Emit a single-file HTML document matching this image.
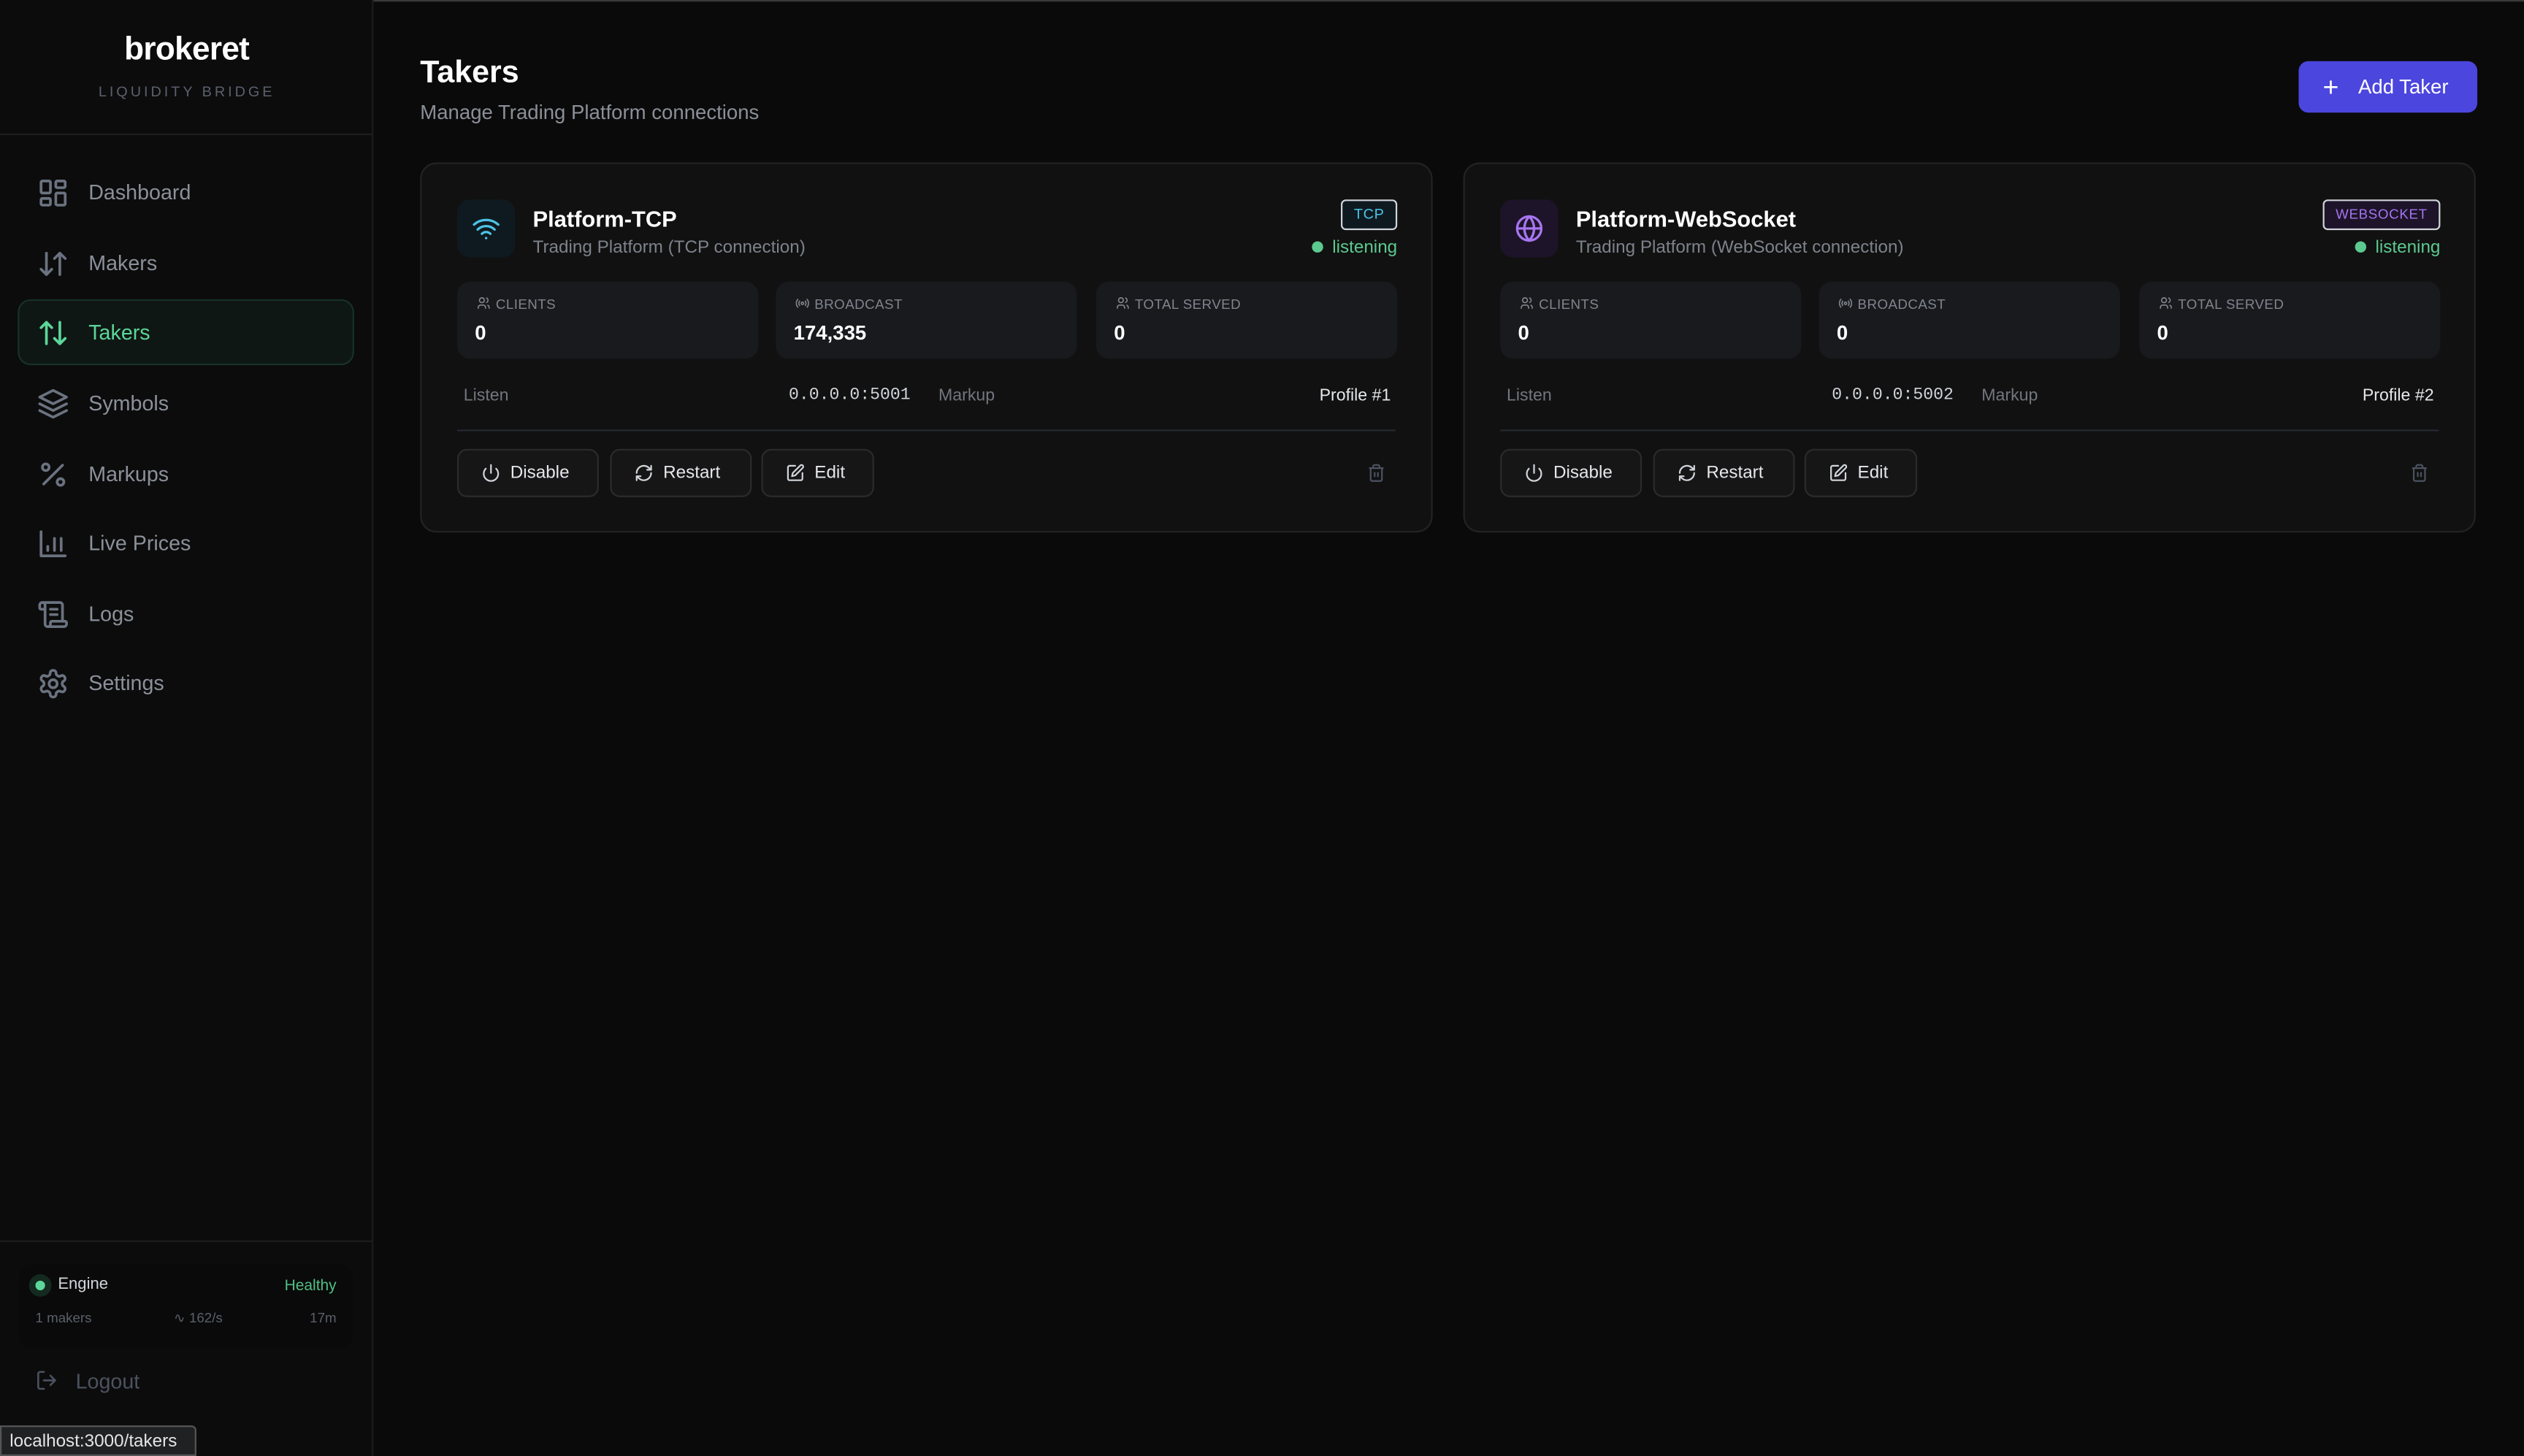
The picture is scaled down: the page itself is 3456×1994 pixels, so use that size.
<!DOCTYPE html>
<html><head><meta charset="utf-8">
<style>
html,body{margin:0;padding:0;background:#0a0a0a;width:3456px;height:1994px;overflow:hidden}
#w{position:absolute;left:0;top:0;width:1568px;height:905px;transform:scale(2.2041,2.2033);transform-origin:0 0;font-family:"Liberation Sans",sans-serif;color:#e5e7eb;background:#0a0a0a}
.a{position:absolute}
.sb{left:0;top:0;width:232px;height:905px;background:#0c0c0c;border-right:1px solid #1c1c1c;box-sizing:border-box}
.nav{position:absolute;left:11px;width:209px;height:41px;box-sizing:border-box;border-radius:8px}
.nav svg{position:absolute;left:12px;top:11px;width:20px;height:20px;fill:none;stroke:#6b7280;stroke-width:2;stroke-linecap:round;stroke-linejoin:round}
.nav span{position:absolute;left:44px;top:13px;font-size:13px;color:#8b909a}
.card{top:101px;width:629px;height:230px;background:#111;border:1px solid #232323;border-radius:10px;box-sizing:border-box}
.ib{left:22px;top:22px;width:36px;height:36px;border-radius:8px}
.nm{left:69px;top:26px;font-size:14px;font-weight:bold;color:#fff}
.sub{left:69px;top:46px;font-size:11px;color:#7d828b}
.badge{right:21px;top:22px;height:17px;padding:0 7px;border:1px solid #d0d4da;border-radius:3px;font-size:9px;line-height:17px;letter-spacing:.3px}
.lis{right:21px;top:46px;font-size:11px;color:#5cc98f}
.lis:before{content:"";display:inline-block;width:7px;height:7px;border-radius:50%;background:#5cc98f;margin-right:6px;vertical-align:0}
.st{top:73px;width:187px;height:48px;background:#181a1e;border-radius:8px}
.st .l{position:absolute;left:12px;top:9px;font-size:8.5px;color:#80858d;letter-spacing:.2px}
.st .l svg{width:9px;height:9px;vertical-align:-1px;margin-right:3px;fill:none;stroke:#80858d;stroke-width:2}
.st .v{position:absolute;left:11px;top:25px;font-size:12.5px;font-weight:bold;color:#fff}
.row{top:138px;font-size:10.5px;color:#72767e}
.mono{font-family:"Liberation Mono",monospace;color:#d1d5db;font-size:10.5px}
.hr{left:22px;right:22px;top:165px;height:1px;background:#252a32}
.btn{top:177px;height:30px;border:1px solid #2b2b2b;background:#161616;border-radius:6px;box-sizing:border-box;font-size:11px;color:#e5e7eb;line-height:29px}
.btn svg{position:absolute;left:14px;top:8px;width:12px;height:12px;fill:none;stroke:#d1d5db;stroke-width:2;stroke-linecap:round;stroke-linejoin:round}
.btn span{position:absolute;left:32px}
</style></head><body><div id="w">
<div class="a" style="left:0;top:0;width:1568px;height:1px;background:#3a3a3a"></div>
<div class="a sb">
 <div class="a" style="left:0;width:232px;top:20px;text-align:center;font-size:20px;font-weight:bold;color:#fff;letter-spacing:-.3px">brokeret</div>
 <div class="a" style="left:0;width:232px;top:52px;text-align:center;font-size:9px;color:#5a606e;letter-spacing:1.8px">LIQUIDITY BRIDGE</div>
 <div class="a" style="left:0;width:231px;top:83px;height:1px;background:#1e1e1e"></div>
 <div class="nav" style="top:99px"><svg viewBox="0 0 24 24"><rect x="3" y="3" width="7" height="9" rx="1"/><rect x="14" y="3" width="7" height="5" rx="1"/><rect x="14" y="12" width="7" height="9" rx="1"/><rect x="3" y="16" width="7" height="5" rx="1"/></svg><span>Dashboard</span></div>
 <div class="nav" style="top:143px"><svg viewBox="0 0 24 24"><path d="M3 16l4 4 4-4M7 20V4M21 8l-4-4-4 4M17 4v16"/></svg><span>Makers</span></div>
 <div class="nav" style="top:186px;background:#0f1714;border:1px solid #173226"><svg viewBox="0 0 24 24" style="stroke:#5cd69a;left:11px;top:10px"><path d="M3 8l4-4 4 4M7 4v16M21 16l-4 4-4-4M17 20V4"/></svg><span style="color:#5cd69a;left:43px;top:12px">Takers</span></div>
 <div class="nav" style="top:230px"><svg viewBox="0 0 24 24"><path d="M12 2l10 5-10 5L2 7z"/><path d="M2 12l10 5 10-5M2 17l10 5 10-5"/></svg><span>Symbols</span></div>
 <div class="nav" style="top:274px"><svg viewBox="0 0 24 24"><path d="M19 5L5 19"/><circle cx="6.5" cy="6.5" r="2.5"/><circle cx="17.5" cy="17.5" r="2.5"/></svg><span>Markups</span></div>
 <div class="nav" style="top:317px"><svg viewBox="0 0 24 24"><path d="M3 3v18h18M8 17v-3M13 17V8M18 17v-9"/></svg><span>Live Prices</span></div>
 <div class="nav" style="top:361px"><svg viewBox="0 0 24 24"><path d="M15 12h-5M15 8h-5M19 17V5a2 2 0 0 0-2-2H4M8 21h12a2 2 0 0 0 2-2v-1a1 1 0 0 0-1-1H11a1 1 0 0 0-1 1v1a2 2 0 1 1-4 0V5a2 2 0 1 0-4 0v2a1 1 0 0 0 1 1h3"/></svg><span>Logs</span></div>
 <div class="nav" style="top:404px"><svg viewBox="0 0 24 24"><path d="M12.2 2h-.4a2 2 0 0 0-2 2v.2a2 2 0 0 1-1 1.7l-.4.3a2 2 0 0 1-2 0l-.2-.1a2 2 0 0 0-2.7.7l-.2.4a2 2 0 0 0 .7 2.7l.2.1a2 2 0 0 1 1 1.7v.5a2 2 0 0 1-1 1.7l-.2.1a2 2 0 0 0-.7 2.7l.2.4a2 2 0 0 0 2.7.7l.2-.1a2 2 0 0 1 2 0l.4.3a2 2 0 0 1 1 1.7v.2a2 2 0 0 0 2 2h.4a2 2 0 0 0 2-2v-.2a2 2 0 0 1 1-1.7l.4-.3a2 2 0 0 1 2 0l.2.1a2 2 0 0 0 2.7-.7l.2-.4a2 2 0 0 0-.7-2.7l-.2-.1a2 2 0 0 1-1-1.7v-.5a2 2 0 0 1 1-1.7l.2-.1a2 2 0 0 0 .7-2.7l-.2-.4a2 2 0 0 0-2.7-.7l-.2.1a2 2 0 0 1-2 0l-.4-.3a2 2 0 0 1-1-1.7V4a2 2 0 0 0-2-2z"/><circle cx="12" cy="12" r="3"/></svg><span>Settings</span></div>
 <div class="a" style="left:0;width:231px;top:771px;height:1px;background:#1e1e1e"></div>
 <div class="a" style="left:12px;top:786px;width:207px;height:52px;background:#0a0a0a;border-radius:8px">
  <div class="a" style="left:6px;top:6px;width:14px;height:14px;border-radius:50%;background:#14291f"></div>
  <div class="a" style="left:10px;top:10px;width:6px;height:6px;border-radius:50%;background:#5cd69a"></div>
  <div class="a" style="left:24px;top:7px;font-size:10px;color:#d1d5db">Engine</div>
  <div class="a" style="right:10px;top:8px;font-size:9.5px;color:#4fbf85">Healthy</div>
  <div class="a" style="left:10px;top:28px;font-size:8.5px;color:#5a606a">1 makers</div>
  <div class="a" style="left:96px;top:28px;font-size:8.5px;color:#5a606a">∿ 162/s</div>
  <div class="a" style="right:10px;top:28px;font-size:8.5px;color:#5a606a">17m</div>
 </div>
 <svg class="a" style="left:22px;top:851px;width:14px;height:14px;fill:none;stroke:#4b5260;stroke-width:2;stroke-linecap:round;stroke-linejoin:round" viewBox="0 0 24 24"><path d="M9 21H5a2 2 0 0 1-2-2V5a2 2 0 0 1 2-2h4M16 17l5-5-5-5M21 12H9"/></svg>
 <div class="a" style="left:47px;top:851px;font-size:13px;color:#4b5260">Logout</div>
</div>
<div class="a" style="left:0;top:886px;width:122px;height:19px;background:#1f2122;border:1px solid #555;border-radius:0 3px 0 0;box-sizing:border-box;font-size:11px;color:#e5e5e5;line-height:18px;padding-left:5px">localhost:3000/takers</div>

<div class="a" style="left:261px;top:34px;font-size:19.5px;font-weight:bold;color:#fff">Takers</div>
<div class="a" style="left:261px;top:63px;font-size:12.5px;color:#8b8f98">Manage Trading Platform connections</div>
<div class="a" style="left:1428px;top:38px;width:111px;height:32px;background:#4b46dd;border-radius:6px;font-size:12.5px;color:#fff;line-height:33px"><span style="position:absolute;left:15px;font-size:17px;top:0">+</span><span style="position:absolute;left:37px">Add Taker</span></div>

<!-- card 1 -->
<div class="a card" style="left:261px">
 <div class="a ib" style="background:#0f1a20"><svg style="position:absolute;left:9px;top:9px;width:18px;height:18px;fill:none;stroke:#4cc3e6;stroke-width:2;stroke-linecap:round" viewBox="0 0 24 24"><path d="M12 20h.01M2 8.8a15 15 0 0 1 20 0M5 12.9a10 10 0 0 1 14 0M8.5 16.4a5 5 0 0 1 7 0"/></svg></div>
 <div class="a nm">Platform-TCP</div>
 <div class="a sub">Trading Platform (TCP connection)</div>
 <div class="a badge" style="color:#4cc3e6;background:#0f1a20">TCP</div>
 <div class="a lis">listening</div>
 <div class="a st" style="left:22px"><div class="l"><svg viewBox="0 0 24 24"><circle cx="9" cy="7" r="4"/><path d="M3 21v-2a4 4 0 0 1 4-4h4a4 4 0 0 1 4 4v2M16 3.1a4 4 0 0 1 0 7.8M21 21v-2a4 4 0 0 0-3-3.9"/></svg>CLIENTS</div><div class="v">0</div></div>
 <div class="a st" style="left:220px"><div class="l"><svg viewBox="0 0 24 24"><circle cx="12" cy="12" r="2"/><path d="M4.9 19.1a10 10 0 0 1 0-14.2M7.8 16.2a6 6 0 0 1 0-8.4M16.2 7.8a6 6 0 0 1 0 8.4M19.1 4.9a10 10 0 0 1 0 14.2"/></svg>BROADCAST</div><div class="v">174,335</div></div>
 <div class="a st" style="left:419px"><div class="l"><svg viewBox="0 0 24 24"><circle cx="9" cy="7" r="4"/><path d="M3 21v-2a4 4 0 0 1 4-4h4a4 4 0 0 1 4 4v2M16 3.1a4 4 0 0 1 0 7.8M21 21v-2a4 4 0 0 0-3-3.9"/></svg>TOTAL SERVED</div><div class="v">0</div></div>
 <div class="a row" style="left:26px">Listen</div>
 <div class="a row mono" style="left:228px">0.0.0.0:5001</div>
 <div class="a row" style="left:321px">Markup</div>
 <div class="a row" style="right:25px;color:#e5e7eb">Profile #1</div>
 <div class="a hr"></div>
 <div class="a btn" style="left:22px;width:88px"><svg viewBox="0 0 24 24"><path d="M12 2v10M18.4 6.6a9 9 0 1 1-12.8 0"/></svg><span>Disable</span></div>
 <div class="a btn" style="left:117px;width:88px"><svg viewBox="0 0 24 24"><path d="M3 12a9 9 0 0 1 15-6.7L21 8M21 3v5h-5M21 12a9 9 0 0 1-15 6.7L3 16M8 16H3v5"/></svg><span>Restart</span></div>
 <div class="a btn" style="left:211px;width:70px"><svg viewBox="0 0 24 24"><path d="M12 3H5a2 2 0 0 0-2 2v14a2 2 0 0 0 2 2h14a2 2 0 0 0 2-2v-7M18.4 2.6a2.1 2.1 0 0 1 3 3L12 15l-4 1 1-4z"/></svg><span>Edit</span></div>
 <svg class="a" style="left:587px;top:186px;width:12px;height:12px;fill:none;stroke:#4b5260;stroke-width:2" viewBox="0 0 24 24"><path d="M3 6h18M19 6v14a2 2 0 0 1-2 2H7a2 2 0 0 1-2-2V6M8 6V4a2 2 0 0 1 2-2h4a2 2 0 0 1 2 2v2M10 11v6M14 11v6"/></svg>
</div>

<!-- card 2 -->
<div class="a card" style="left:909px">
 <div class="a ib" style="background:#1d1429"><svg style="position:absolute;left:9px;top:9px;width:18px;height:18px;fill:none;stroke:#a675f0;stroke-width:2;stroke-linecap:round" viewBox="0 0 24 24"><circle cx="12" cy="12" r="10"/><path d="M12 2a14.5 14.5 0 0 0 0 20 14.5 14.5 0 0 0 0-20M2 12h20"/></svg></div>
 <div class="a nm">Platform-WebSocket</div>
 <div class="a sub">Trading Platform (WebSocket connection)</div>
 <div class="a badge" style="color:#a675f0;background:#1d1429;font-size:8.5px">WEBSOCKET</div>
 <div class="a lis">listening</div>
 <div class="a st" style="left:22px"><div class="l"><svg viewBox="0 0 24 24"><circle cx="9" cy="7" r="4"/><path d="M3 21v-2a4 4 0 0 1 4-4h4a4 4 0 0 1 4 4v2M16 3.1a4 4 0 0 1 0 7.8M21 21v-2a4 4 0 0 0-3-3.9"/></svg>CLIENTS</div><div class="v">0</div></div>
 <div class="a st" style="left:220px"><div class="l"><svg viewBox="0 0 24 24"><circle cx="12" cy="12" r="2"/><path d="M4.9 19.1a10 10 0 0 1 0-14.2M7.8 16.2a6 6 0 0 1 0-8.4M16.2 7.8a6 6 0 0 1 0 8.4M19.1 4.9a10 10 0 0 1 0 14.2"/></svg>BROADCAST</div><div class="v">0</div></div>
 <div class="a st" style="left:419px"><div class="l"><svg viewBox="0 0 24 24"><circle cx="9" cy="7" r="4"/><path d="M3 21v-2a4 4 0 0 1 4-4h4a4 4 0 0 1 4 4v2M16 3.1a4 4 0 0 1 0 7.8M21 21v-2a4 4 0 0 0-3-3.9"/></svg>TOTAL SERVED</div><div class="v">0</div></div>
 <div class="a row" style="left:26px">Listen</div>
 <div class="a row mono" style="left:228px">0.0.0.0:5002</div>
 <div class="a row" style="left:321px">Markup</div>
 <div class="a row" style="right:25px;color:#e5e7eb">Profile #2</div>
 <div class="a hr"></div>
 <div class="a btn" style="left:22px;width:88px"><svg viewBox="0 0 24 24"><path d="M12 2v10M18.4 6.6a9 9 0 1 1-12.8 0"/></svg><span>Disable</span></div>
 <div class="a btn" style="left:117px;width:88px"><svg viewBox="0 0 24 24"><path d="M3 12a9 9 0 0 1 15-6.7L21 8M21 3v5h-5M21 12a9 9 0 0 1-15 6.7L3 16M8 16H3v5"/></svg><span>Restart</span></div>
 <div class="a btn" style="left:211px;width:70px"><svg viewBox="0 0 24 24"><path d="M12 3H5a2 2 0 0 0-2 2v14a2 2 0 0 0 2 2h14a2 2 0 0 0 2-2v-7M18.4 2.6a2.1 2.1 0 0 1 3 3L12 15l-4 1 1-4z"/></svg><span>Edit</span></div>
 <svg class="a" style="left:587px;top:186px;width:12px;height:12px;fill:none;stroke:#4b5260;stroke-width:2" viewBox="0 0 24 24"><path d="M3 6h18M19 6v14a2 2 0 0 1-2 2H7a2 2 0 0 1-2-2V6M8 6V4a2 2 0 0 1 2-2h4a2 2 0 0 1 2 2v2M10 11v6M14 11v6"/></svg>
</div>
</div></body></html>
